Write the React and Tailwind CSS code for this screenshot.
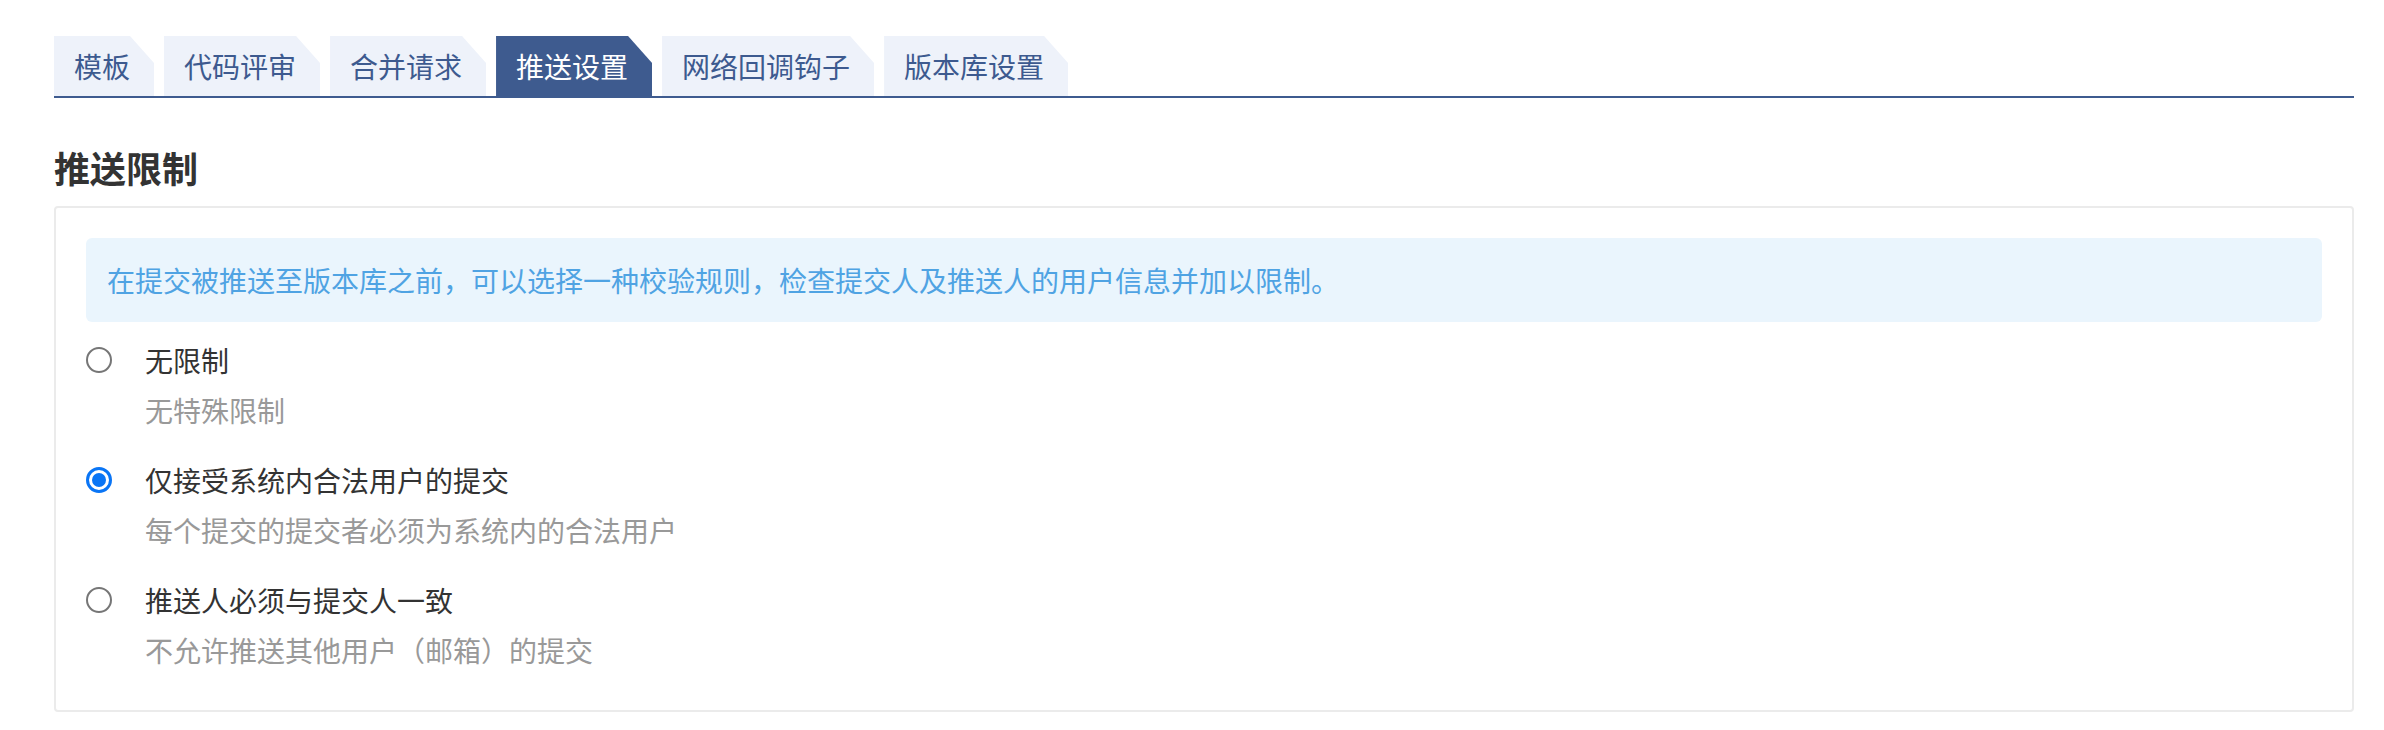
export default function App() {
  const tabs = ["模板", "代码评审", "合并请求", "推送设置", "网络回调钩子", "版本库设置"];
  const active = 3;
  const options = [
    { label: "无限制", desc: "无特殊限制", checked: false },
    { label: "仅接受系统内合法用户的提交", desc: "每个提交的提交者必须为系统内的合法用户", checked: true },
    { label: "推送人必须与提交人一致", desc: "不允许推送其他用户（邮箱）的提交", checked: false },
  ];
  return (
    <div className="min-h-[730px] bg-white pl-[54px] pr-[30px] pt-[36px] font-['Noto_Sans_CJK_SC','Liberation_Sans',sans-serif]">
      <div className="flex gap-[10px] border-b-2 border-[#3e5b8f]">
        {tabs.map((t, i) => (
          <div
            key={t}
            className={
              "h-[60px] pl-[20px] pr-[24px] text-[28px] leading-[60px] whitespace-nowrap [clip-path:polygon(0_0,calc(100%_-_24px)_0,100%_27px,100%_100%,0_100%)] " +
              (i === active ? "bg-[#3e5b8f] text-white" : "bg-[#eef2fa] text-[#3d5a8f]")
            }
          >
            {t}
          </div>
        ))}
      </div>

      <h2 className="mt-[44px] mb-[14px] text-[36px] leading-[50px] font-bold text-[#333333]">推送限制</h2>

      <div className="rounded-[4px] border-2 border-[#ebebeb] px-[30px] pt-[30px] pb-[40px]">
        <div className="h-[84px] rounded-[6px] bg-[#eaf5fd] pl-[21px] text-[28px] leading-[84px] text-[#4fa3e3]">
          在提交被推送至版本库之前，可以选择一种校验规则，检查提交人及推送人的用户信息并加以限制。
        </div>

        <div className="mt-[18px] flex flex-col gap-[30px]">
          {options.map((o) => (
            <div key={o.label} className="flex gap-[33px]">
              <div className="flex h-[40px] items-center">
                {o.checked ? (
                  <span className="flex h-[26px] w-[26px] items-center justify-center rounded-full border-[3px] border-[#0a75f5] bg-white">
                    <span className="h-[14px] w-[14px] rounded-full bg-[#0a75f5]" />
                  </span>
                ) : (
                  <span className="block h-[26px] w-[26px] rounded-full border-2 border-[#767676] bg-white" />
                )}
              </div>
              <div className="flex flex-col">
                <div className="text-[28px] leading-[40px] text-[#333333]">{o.label}</div>
                <div className="mt-[10px] text-[28px] leading-[40px] text-[#999999]">{o.desc}</div>
              </div>
            </div>
          ))}
        </div>
      </div>
    </div>
  );
}
